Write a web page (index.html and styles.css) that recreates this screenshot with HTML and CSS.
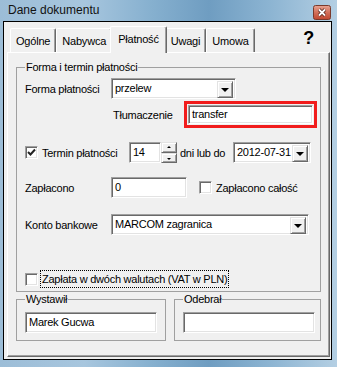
FILE: index.html
```html
<!DOCTYPE html>
<html lang="pl">
<head>
  <meta charset="UTF-8" />
  <title>Dane dokumentu</title>
  <link rel="stylesheet" href="styles.css">
</head>
<body>
  <div class="window">
    <div class="titlebar">
      <span class="title">Dane dokumentu</span>
      <span class="close">
        <svg width="18" height="15" viewBox="0 0 18 15">
          <defs>
            <linearGradient id="cg" x1="0" y1="0" x2="0" y2="1">
              <stop offset="0" stop-color="#e8a493"/>
              <stop offset="0.5" stop-color="#d2705a"/>
              <stop offset="1" stop-color="#c0462e"/>
            </linearGradient>
          </defs>
          <rect x="0.5" y="0.5" width="17" height="14" rx="2" fill="url(#cg)" stroke="#7a3a2c"/>
          <path d="M6 4.5 L12 10.5 M12 4.5 L6 10.5" stroke="#4a1a10" stroke-width="3.2"/>
          <path d="M6 4.5 L12 10.5 M12 4.5 L6 10.5" stroke="#fff" stroke-width="1.8"/>
        </svg>
      </span>
    </div>

    <div class="client">
      <div class="tabs">
        <div class="tab">Ogólne</div>
        <div class="tab">Nabywca</div>
        <div class="tab active">Płatność</div>
        <div class="tab">Uwagi</div>
        <div class="tab">Umowa</div>
        <span class="help">?</span>
      </div>

      <div class="panel">
        <fieldset class="group main">
          <legend>Forma i termin płatności</legend>

          <div class="row r-forma">
            <span class="lbl">Forma płatności</span>
            <div class="combo forma">
              <span class="val">przelew</span>
              <span class="drop"></span>
            </div>
          </div>

          <div class="row r-tlum">
            <span class="lbl-tlum">Tłumaczenie</span>
            <div class="highlight">
              <div class="field tlum">transfer</div>
            </div>
          </div>

          <div class="row r-termin">
            <span class="check checked">
              <svg width="9" height="9" viewBox="0 0 9 9"><path d="M1 4 L3.5 6.5 L8 1.5" fill="none" stroke="#222" stroke-width="2"/></svg>
            </span>
            <span class="lbl-check termin">Termin płatności</span>
            <div class="field days">14</div>
            <div class="spin">
              <span class="spin-btn up"></span>
              <span class="spin-btn down"></span>
            </div>
            <span class="lbl-dni">dni lub do</span>
            <div class="combo date">
              <span class="val">2012-07-31</span>
              <span class="drop"></span>
            </div>
          </div>

          <div class="row r-zapl">
            <span class="lbl">Zapłacono</span>
            <div class="field paid">0</div>
            <span class="check"></span>
            <span class="lbl-check">Zapłacono całość</span>
          </div>

          <div class="row r-konto">
            <span class="lbl">Konto bankowe</span>
            <div class="combo konto">
              <span class="val">MARCOM zagranica</span>
              <span class="drop"></span>
            </div>
          </div>

          <div class="row r-waluty">
            <span class="check"></span>
            <span class="lbl-check focus">Zapłata w dwóch walutach (VAT w PLN)</span>
          </div>
        </fieldset>

        <div class="bottom">
          <fieldset class="group small">
            <legend>Wystawił</legend>
            <div class="field person">Marek Gucwa</div>
          </fieldset>
          <fieldset class="group small">
            <legend>Odebrał</legend>
            <div class="field person"></div>
          </fieldset>
        </div>
      </div>
    </div>
  </div>
</body>
</html>
```

FILE: styles.css
```css
/* Base */
* {
  box-sizing: border-box;
}

body {
  margin: 0;
  width: 337px;
  height: 367px;
  overflow: hidden;
  font-family: "Liberation Sans", Arial, sans-serif;
  font-size: 11px;
  color: #000;
  background: #6f9cc0;
}

/* Window frame */
.window {
  width: 337px;
  height: 367px;
  display: flex;
  flex-direction: column;
  padding: 0 5px 7px 3px;
  background: linear-gradient(90deg, #9cbdd7 0%, #a7c6de 25%, #86b0cf 45%, #6f9dc1 62%, #8cb4d2 80%, #b4cfe3 100%);
}

.titlebar {
  height: 21px;
  display: flex;
  align-items: flex-end;
}

.title {
  font-size: 12px;
  padding: 0 0 4px 5px;
  color: #111;
}

.close {
  margin-left: auto;
  margin-right: 1px;
  margin-bottom: 1px;
  height: 15px;
  display: flex;
}

/* Client area */
.client {
  flex: 1;
  display: flex;
  flex-direction: column;
  background: #f0f0f0;
  border: 1px solid #000;
  padding: 0 1px 2px 3px;
}

/* Tabs */
.tabs {
  height: 30px;
  display: flex;
  align-items: flex-end;
  padding-left: 3px;
  letter-spacing: -0.2px;
}

.tab {
  position: relative;
  height: 24px;
  padding: 6px 5px 0;
  border-top: 1px solid #fff;
  border-left: 1px solid #fff;
  border-right: 1px solid #696969;
  border-radius: 2px 2px 0 0;
  box-shadow: inset -1px 0 0 #a0a0a0;
  background: #f0f0f0;
}

.tab.active {
  height: 27px;
  margin: 0 -2px -1px;
  padding: 6px 7px 0;
  z-index: 1;
}

.help {
  margin-left: auto;
  margin-right: 16px;
  align-self: center;
  margin-top: 2px;
  font-size: 18px;
  font-weight: bold;
  font-family: "Liberation Sans", Arial, sans-serif;
}

.panel {
  flex: 1;
  display: flex;
  flex-direction: column;
  border-top: 1px solid #fff;
  border-left: 1px solid #fff;
  border-right: 1px solid #696969;
  border-bottom: 1px solid #696969;
  box-shadow: inset -1px -1px 0 #a0a0a0;
  padding: 8px 8px 0;
  letter-spacing: -0.25px;
}

/* Group boxes */
.group {
  margin: 0;
  padding: 0 8px 3px;
  min-inline-size: 0;
  border: 1px solid #a0a0a0;
}

.group legend {
  padding: 0 1px;
  line-height: 13px;
}

.row {
  display: flex;
  align-items: center;
}

.row > * {
  flex-shrink: 0;
}

.lbl {
  width: 86px;
}

.r-forma { margin-top: 4px; }
.r-tlum { margin-top: 2px; }
.r-termin { margin-top: 14px; }
.r-zapl { margin-top: 14px; }
.r-konto { margin-top: 16px; }
.r-waluty { margin-top: 35px; height: 18px; }

.lbl-tlum {
  margin-left: 88px;
  width: 71px;
}

.highlight {
  border: 3px solid #f11c1c;
  padding: 1px;
}

.lbl-check {
  margin-left: 4px;
}

.termin {
  width: 87px;
}

.lbl-dni {
  margin-left: 3px;
  width: 53px;
}

.focus {
  outline: 1px dotted #000;
  padding: 2px 1px;
  margin-left: 3px;
}

/* Sunken controls */
.field,
.combo {
  height: 21px;
  background: #fff;
  border: 1px solid;
  border-color: #a0a0a0 #fff #fff #a0a0a0;
  box-shadow: inset 1px 1px 0 #696969, inset -1px -1px 0 #e3e3e3;
  padding: 3px 2px 0 3px;
  white-space: nowrap;
}

.tlum { width: 125px; height: 19px; padding-top: 2px; }
.days { width: 32px; }
.paid { width: 76px; }
.person { width: 132px; }

.combo {
  display: flex;
  padding: 2px 2px 2px 3px;
}

.combo .val {
  flex: 1;
  padding-top: 1px;
}

.forma { width: 125px; }
.date { width: 78px; }
.konto { width: 198px; }

.drop,
.spin-btn {
  position: relative;
  display: block;
  width: 16px;
  background: #f0f0f0;
  border: 1px solid;
  border-color: #e3e3e3 #696969 #696969 #e3e3e3;
  box-shadow: inset 1px 1px 0 #fff, inset -1px -1px 0 #a0a0a0;
}

.drop {
  height: 17px;
  flex-shrink: 0;
}

.drop::after {
  content: "";
  position: absolute;
  left: 3px;
  top: 6px;
  border-left: 4px solid transparent;
  border-right: 4px solid transparent;
  border-top: 4px solid #000;
}

.spin {
  display: flex;
  flex-direction: column;
  height: 21px;
}

.spin-btn {
  height: 10px;
  flex: 1;
}

.spin-btn::after {
  content: "";
  position: absolute;
  left: 5px;
  border-left: 2px solid transparent;
  border-right: 2px solid transparent;
}

.spin-btn.up::after {
  top: 3px;
  border-bottom: 2px solid #000;
}

.spin-btn.down::after {
  top: 4px;
  border-top: 2px solid #000;
}

/* Checkboxes */
.check {
  width: 13px;
  height: 13px;
  background: #fff;
  border: 1px solid;
  border-color: #a0a0a0 #fff #fff #a0a0a0;
  box-shadow: inset 1px 1px 0 #696969, inset -1px -1px 0 #e3e3e3;
  display: flex;
  align-items: center;
  justify-content: center;
}

.r-zapl .check {
  margin-left: 12px;
}

/* Bottom groups */
.bottom {
  display: grid;
  grid-template-columns: 150px 1fr;
  gap: 8px;
  margin-top: 1px;
}

.small {
  padding: 0 7px 7px 8px;
}

.small .field {
  margin-top: 6px;
}
```
